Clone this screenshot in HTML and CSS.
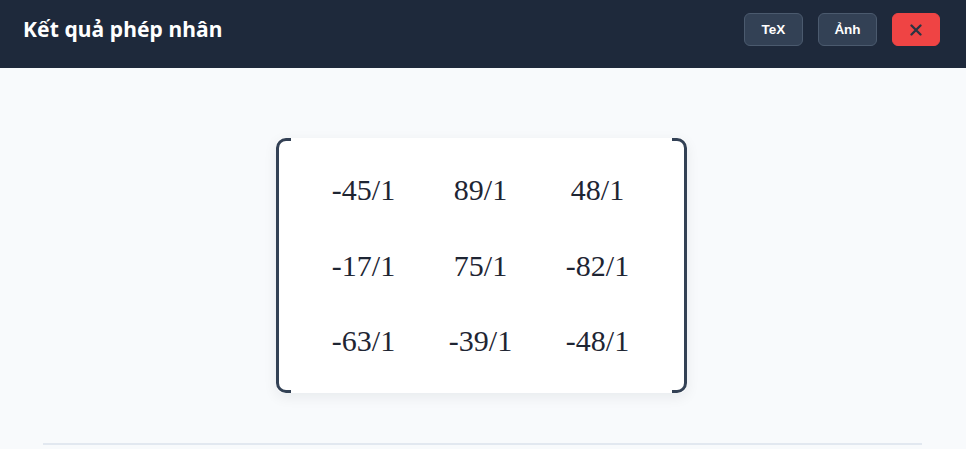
FILE: index.html
```html
<!DOCTYPE html>
<html lang="vi">
<head>
<meta charset="utf-8">
<title>Kết quả phép nhân</title>
<link rel="stylesheet" href="styles.css">
</head>
<body>
<header class="topbar">
  <h1 class="title">Kết quả phép nhân</h1>
  <div class="actions">
    <button class="btn btn-ghost btn-tex">TeX</button>
    <button class="btn btn-ghost btn-img">Ảnh</button>
    <button class="btn btn-close" aria-label="Đóng">
      <svg width="12" height="12" viewBox="0 0 12 12"><path d="M1.5 1.5 L10.5 10.5 M10.5 1.5 L1.5 10.5" stroke="#2b3442" stroke-width="2.3" stroke-linecap="round"/></svg>
    </button>
  </div>
</header>
<main class="content">
  <div class="matrix">
    <span class="bracket bracket-left"></span>
    <div class="grid">
      <div class="cell">-45/1</div><div class="cell">89/1</div><div class="cell">48/1</div>
      <div class="cell">-17/1</div><div class="cell">75/1</div><div class="cell">-82/1</div>
      <div class="cell">-63/1</div><div class="cell">-39/1</div><div class="cell">-48/1</div>
    </div>
    <span class="bracket bracket-right"></span>
  </div>
  <hr class="divider">
</main>
</body>
</html>
```
FILE: styles.css
```css
* { box-sizing: border-box; }
html, body { margin: 0; padding: 0; }
body {
  background: #f8fafc;
  font-family: "Noto Sans", "Open Sans", "Liberation Sans", sans-serif;
  height: 449px;
  overflow: hidden;
}
.topbar {
  height: 68px;
  background: #1e293b;
  display: flex;
  align-items: center;
  justify-content: space-between;
  padding: 13px 26px 22px 23px;
}
.title {
  margin: 0;
  color: #ffffff;
  font-size: 21px;
  font-weight: 700;
  letter-spacing: 0.1px;
  line-height: 1;
}
.actions {
  display: flex;
  gap: 15px;
  align-items: center;
}
.btn {
  height: 33px;
  border-radius: 6px;
  font-family: "Liberation Sans", Arial, sans-serif;
  font-weight: 700;
  font-size: 13.5px;
  cursor: pointer;
  display: flex;
  align-items: center;
  justify-content: center;
  padding: 0;
}
.btn-ghost {
  background: #334155;
  border: 1px solid #4b5a6e;
  color: #ffffff;
}
.btn-tex { width: 59px; }
.btn-img { width: 59px; }
.btn-close {
  width: 48px;
  background: #ef4444;
  border: 1px solid #ef4444;
}
.content {
  display: flex;
  flex-direction: column;
  align-items: center;
  padding: 70px 43px 0 43px;
}
.matrix {
  position: relative;
  width: 411px;
  height: 255px;
  margin-left: -3px;
  background: #ffffff;
  border-radius: 8px;
  box-shadow: 0 4px 14px rgba(15, 23, 42, 0.07);
  display: flex;
  align-items: center;
  justify-content: center;
}
.bracket {
  position: absolute;
  top: 0;
  bottom: 0;
  width: 15px;
  border: 3px solid #334155;
}
.bracket-left {
  left: 0;
  border-right: none;
  border-radius: 10px 0 0 10px;
}
.bracket-right {
  right: 0;
  border-left: none;
  border-radius: 0 10px 10px 0;
}
.grid {
  display: grid;
  grid-template-columns: repeat(3, 117px);
  grid-auto-rows: 75.5px;
  margin-left: -2px;
}
.cell {
  display: flex;
  align-items: center;
  justify-content: center;
  font-family: "Liberation Serif", "Times New Roman", serif;
  font-size: 30px;
  color: #1e2533;
}
.divider {
  align-self: stretch;
  border: none;
  height: 2px;
  background: #e2e8f0;
  margin: 50px 1px 0 0;
}
```
